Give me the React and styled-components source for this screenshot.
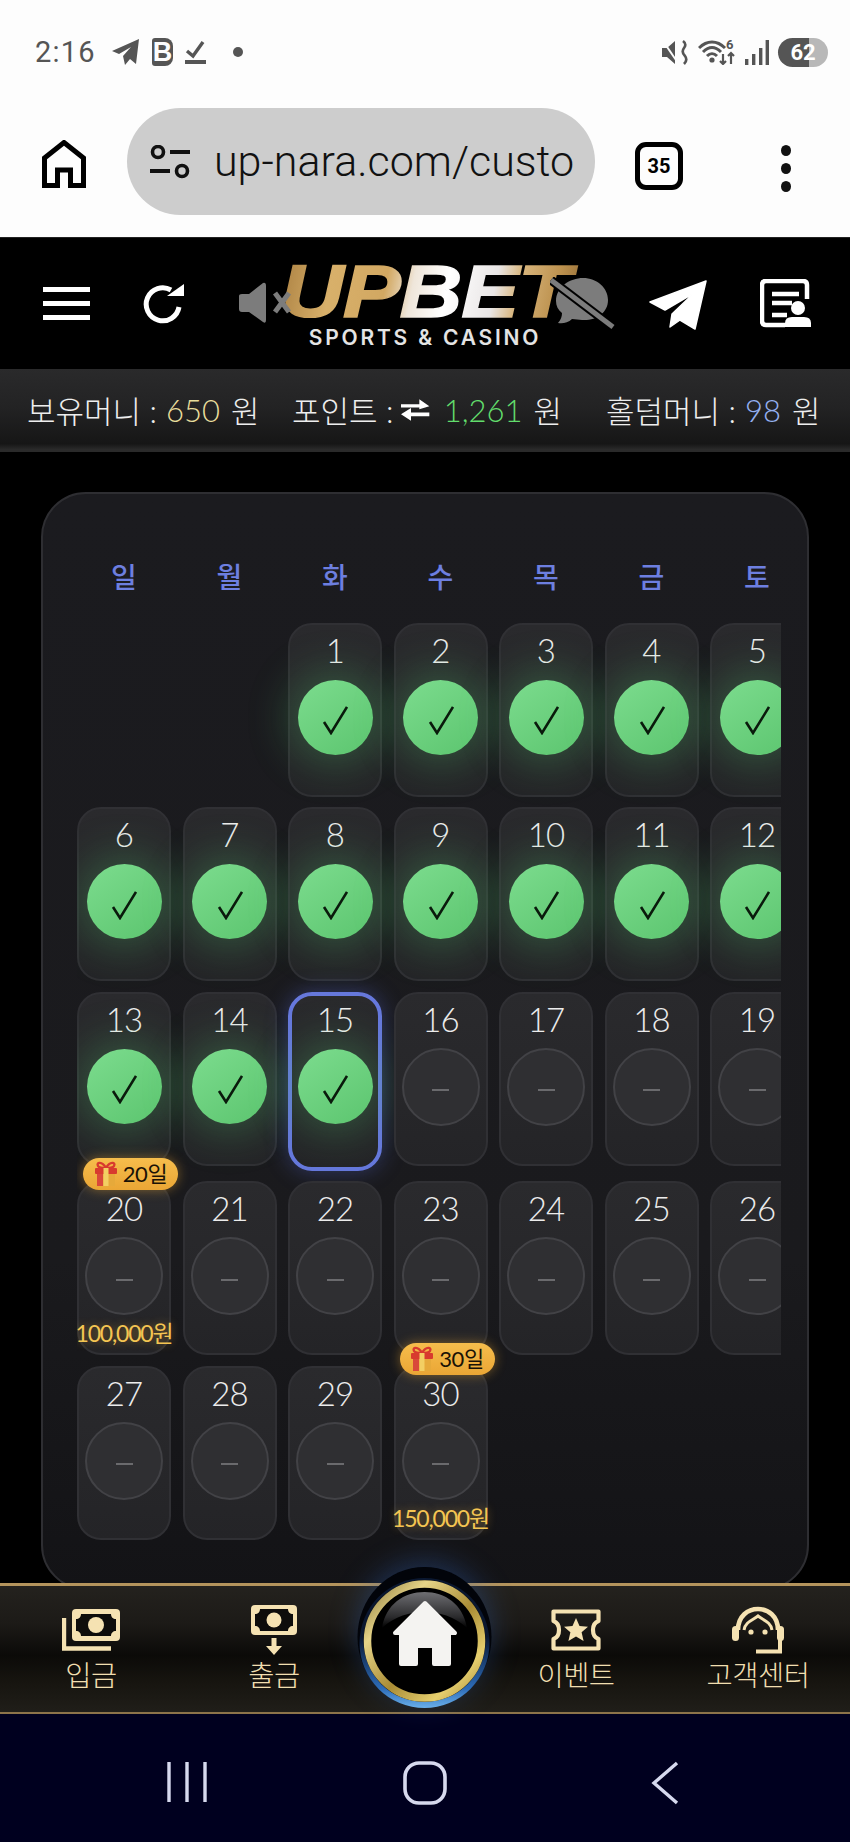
import React from "react";
import styled, { createGlobalStyle } from "styled-components";

const Global = createGlobalStyle`
  html, body { margin: 0; padding: 0; background: #000; }
  * { box-sizing: border-box; }
  body { font-family: Roboto, "Noto Sans CJK KR", sans-serif; }
`;

const Page = styled.div`
  width: 850px; height: 1842px; display: flex; flex-direction: column;
  overflow: hidden; background: #000; position: relative;
`;

/* ---------- phone status bar ---------- */
const StatusBar = styled.div`
  height: 104px; flex: none; background: #fdfdfd; display: flex; align-items: center;
  padding: 0 22px 0 35px; color: #555;
`;
const Clock = styled.span`
  font-size: 29px; letter-spacing: 1.2px; margin-right: 17px; width: 59px;
`;
const StatusLeft = styled.div`display: flex; align-items: center; gap: 12px;`;
const BrandB = styled.span`
  font: 900 27px/28px "Liberation Sans", sans-serif; width: 21px; height: 28px; background: #555;
  color: #fdfdfd; border-radius: 3px 8px 8px 3px; text-align: center; overflow: hidden;
`;
const Dot = styled.span`width: 10px; height: 10px; background: #555; border-radius: 50%; margin-left: 15px;`;
const StatusRight = styled.div`margin-left: auto; display: flex; align-items: center; gap: 9px;`;
const Battery = styled.div`
  width: 50px; height: 29px; border-radius: 15px; color: #fff; font: 700 22px/29px Roboto, sans-serif; text-align: center;
  background: linear-gradient(90deg, #555 0 62%, #b8b8b8 62% 100%);
`;

/* ---------- browser bar ---------- */
const BrowserBar = styled.div`
  height: 134px; flex: none; background: #fdfdfd; display: flex; align-items: flex-start; padding: 4px 0 0 42px;
  border-bottom: 1px solid #222;
`;
const BrowserIcon = styled.div`
  margin-top: ${p => p.$top}px; margin-left: ${p => p.$left}px; display: flex;
`;
const UrlPill = styled.div`
  width: 468px; height: 107px; margin-left: 41px; border-radius: 54px; background: #cdcdcd;
  display: flex; align-items: center; padding-left: 23px; color: #111; overflow: hidden;
`;
const UrlText = styled.span`
  font-size: 43px; font-weight: 300; margin-left: 24px; white-space: nowrap; margin-top: -2px;
`;
const TabCount = styled.div`
  width: 48px; height: 48px; border: 5px solid #000; border-radius: 11px; color: #000; margin-top: 34px; margin-left: 40px;
  font: 700 20px/38px Roboto, sans-serif; text-align: center;
`;
const Dots = styled.div`
  margin-left: 98px; margin-top: 37px; display: flex; flex-direction: column; gap: 7px;
`;
const DotItem = styled.span`width: 10px; height: 11px; border-radius: 50%; background: #111;`;

/* ---------- site header ---------- */
const Header = styled.header`
  height: 131px; flex: none; background: #000; display: flex; align-items: center; padding-left: 43px;
`;
const Burger = styled.div`display: flex; flex-direction: column; gap: 9px; width: 47px;`;
const BurgerBar = styled.span`height: 5px; background: #fff;`;
const HeaderIcon = styled.div`display: flex; margin-left: ${p => p.$left}px;`;
const Logo = styled.div`
  position: relative; width: 285px; height: 80px; margin-left: 99px; flex: none; text-align: center;
`;
const LogoMark = styled.div`
  font: italic 700 75px/54px "Liberation Sans", sans-serif; height: 54px; white-space: nowrap;
  transform: scaleX(1.16); transform-origin: 50% 50%; letter-spacing: -1px; margin-left: -2px;
  background: linear-gradient(100deg, #a57a3c 4%, #d8b06a 22%, #d2a862 38%, #efe6da 46%, #fff 56%, #e9e6e6 70%, #d8b57c 77%, #bd924f 88%, #8c6531 98%);
  -webkit-background-clip: text; background-clip: text; color: transparent; -webkit-text-stroke: 1.5px transparent;
`;
const LogoSub = styled.div`
  font: 600 21px/20px Inter, "Liberation Sans", sans-serif; color: #e4e4e4; letter-spacing: 2.8px;
  margin-top: 10px; white-space: nowrap; margin-left: -3px;
`;
const LogoOverlay = styled.div`position: absolute; left: ${p => p.$left}px; top: ${p => p.$top}px; display: flex;`;

/* ---------- balance bar ---------- */
const BalanceBar = styled.div`
  height: 83px; flex: none; display: flex; align-items: center; padding-left: 27px; color: #eee;
  background: linear-gradient(180deg, #2a2a2b 0%, #232324 45%, #161616 90%, #2a2a2a 97%);
  font-family: Lato, "Noto Sans CJK KR", sans-serif; font-size: 31px; font-weight: 300; white-space: nowrap; padding-bottom: 2px;
`;
const BalanceGroup = styled.div`
  display: flex; align-items: center; width: ${p => p.$w}px; margin-left: ${p => p.$ml}px; flex: none;
`;
const BalanceValue = styled.span`
  color: ${p => p.$c}; margin: 0 11px 0 ${p => p.$left}px;
`;

/* ---------- calendar ---------- */
const Content = styled.main`
  flex: 1; min-height: 0; overflow: hidden; padding: 40px 41px 0 41px; background: #000;
`;
const Panel = styled.section`
  height: 1098px; border-radius: 45px; border: 2px solid #2e2e32; padding: 0 26px 0 34px;
  background: linear-gradient(180deg, #1b1b1f 0%, #1a1a1d 70%, #131316 100%);
`;
const CalClip = styled.div`overflow: hidden; height: 100%; padding-top: 62px;`;
const Calendar = styled.div`
  width: 727px; display: grid; grid-template-columns: repeat(7, 94px); column-gap: 11.5px; row-gap: 10.5px; align-items: start;
`;
const Weekday = styled.div`
  color: #6d7fe0; font: 500 28px/40px "Noto Sans CJK KR", sans-serif; text-align: center; height: 40px; margin-bottom: 16px;
`;
const Cell = styled.div`
  position: relative; height: ${p => (p.$selected ? 179 : 174)}px; border-radius: 24px;
  display: flex; flex-direction: column; align-items: center; padding-top: ${p => (p.$selected ? 8 : 10)}px;
  background: linear-gradient(180deg, #2a2a2d 0%, #242427 100%);
  border: ${p => (p.$selected ? "4px solid #6678dc" : "2px solid #303034")};
  box-shadow: ${p => (p.$selected ? "0 0 22px rgba(90,110,225,.38)" : "none")};
  ${p => p.$start ? `grid-column-start: ${p.$start};` : ""}
`;
const DayNum = styled.div`
  font-family: Lato, Roboto, sans-serif; font-size: 33px; font-weight: 300; line-height: 30px; color: #ececec; letter-spacing: -0.8px;
`;
const DoneCircle = styled.div`
  width: 75px; height: 75px; border-radius: 50%; margin-top: 15px; flex: none; display: flex; align-items: center; justify-content: center;
  padding-top: 6px;
  background: linear-gradient(145deg, #7cdc8e 0%, #5cc56f 100%);
  box-shadow: 0 0 42px 10px rgba(85,205,115,.27);
`;
const PendingCircle = styled.div`
  width: 78px; height: 78px; border-radius: 50%; margin-top: 14px; flex: none; display: flex; align-items: center; justify-content: center;
  padding-top: 7px; background: #2f2f32; border: 2px solid #424246;
`;
const Dash = styled.span`width: 17px; height: 2px; background: #6a6a6d;`;
const RewardBadge = styled.div`
  position: absolute; top: -25px; left: 4px; width: 95px; height: 32px; border-radius: 16px; z-index: 2; gap: 5px;
  display: flex; align-items: center; justify-content: center; color: #1a1206;
  font: 400 22px/32px Lato, "Noto Sans CJK KR", sans-serif; letter-spacing: -0.5px;
  background: linear-gradient(180deg, #f6bd4c 0%, #eaa635 100%);
  box-shadow: 0 0 12px rgba(240,170,50,.45);
`;
const Amount = styled.div`
  position: absolute; left: 50%; bottom: 5px; transform: translateX(-50%); white-space: nowrap; color: #f4c552;
  font: 400 23px/30px Lato, "Noto Sans CJK KR", sans-serif; letter-spacing: -1.2px;
  text-shadow: 0 0 8px rgba(240,180,60,.45);
`;

/* ---------- bottom nav ---------- */
const BottomNav = styled.nav`
  position: relative; height: 131px; flex: none; display: grid; grid-template-columns: 182px 184px 116px 188px 176px;
  padding-top: 18px; border-top: 3px solid #b4945c; border-bottom: 2px solid #8d744a;
  background: linear-gradient(180deg, #24221e 0%, #1c1a17 30%, #0b0a08 55%, #16140f 75%, #201e19 100%);
`;
const NavItem = styled.a`
  display: flex; flex-direction: column; align-items: center; color: #f1dfb0;
`;
const NavIconBox = styled.div`height: 52px; display: flex; align-items: center; justify-content: center;`;
const NavLabel = styled.span`
  font: 300 28.5px/32px "Noto Sans CJK KR", sans-serif; margin-top: 2px; white-space: nowrap; letter-spacing: -0.5px;
`;
const HomeButton = styled.div`
  position: absolute; left: 354px; top: -24px; display: flex; z-index: 3;
  filter: drop-shadow(0 -6px 14px rgba(50,100,190,.35));
`;

/* ---------- android nav ---------- */
const AndroidBar = styled.div`
  height: 128px; flex: none; background: #00001f; display: flex; align-items: flex-start; padding: 47px 0 0 167px;
`;
const AndroidIcon = styled.div`display: flex; margin-left: ${p => p.$left}px;`;

/* ---------- drawings ---------- */
const Check = () => (
  <svg width="26" height="30" viewBox="0 0 26 30" fill="none">
    <path d="M2 17 L9 28 L25 2" stroke="#0a1a0c" strokeWidth="2.6" />
  </svg>
);

const Gift = () => (
  <svg width="24" height="26" viewBox="0 0 24 26">
    <path d="M12 7 C8 0 2 1 4 5 C5 7 9 7 12 7 C15 7 19 7 20 5 C22 1 16 0 12 7Z" fill="none" stroke="#d83a2e" strokeWidth="2.4" />
    <rect x="1" y="7" width="22" height="6" rx="1" fill="#d83a2e" />
    <rect x="3" y="13" width="18" height="12" fill="#e6a93a" />
    <rect x="3" y="13" width="6" height="12" fill="#d9483a" />
    <rect x="9.5" y="7" width="5" height="18" fill="#f3cf63" />
  </svg>
);

const StatusTelegram = () => (
  <svg width="29" height="26" viewBox="0 0 29 26"><path d="M28 0 L1 12 L8 15 L20 8 L12 17 L14 26 L19 20 L25 25 Z" fill="#555" /></svg>
);
const StatusCheck = () => (
  <svg width="21" height="26" viewBox="0 0 21 26" fill="none"><path d="M2 12 L8 17 L18 3" stroke="#555" strokeWidth="3.4" /><rect y="21" width="21" height="4" fill="#555" /></svg>
);
const Muted = () => (
  <svg width="28" height="25" viewBox="0 0 28 25" fill="none">
    <path d="M1 8 H6 L14 1 V24 L6 17 H1 Z" fill="#555" />
    <path d="M2 1 L17 23" stroke="#fdfdfd" strokeWidth="2" />
    <path d="M22 1 Q26 4 23 8 Q20 12 24 16 Q27 20 23 24" stroke="#555" strokeWidth="2.6" />
  </svg>
);
const Wifi = () => (
  <svg width="38" height="26" viewBox="0 0 38 26" fill="none">
    <path d="M1 9 C9 1 19 1 27 9 M5 13 C11 7 17 7 23 13 M9 17 C12 14 16 14 19 17" stroke="#555" strokeWidth="3" />
    <circle cx="14" cy="21" r="2.6" fill="#555" />
    <text x="28" y="10" fontSize="13" fontWeight="700" fontFamily="Roboto, sans-serif" fill="#555">6</text>
    <path d="M25 15 V25 M22 22 L25 25 L28 22 M33 25 V14 M30 17 L33 14 L36 17" stroke="#555" strokeWidth="2.2" />
  </svg>
);
const Signal = () => (
  <svg width="24" height="25" viewBox="0 0 24 25" fill="#555">
    <rect x="0" y="19" width="3.4" height="6" /><rect x="7" y="14" width="3.4" height="11" />
    <rect x="14" y="8" width="3.4" height="17" /><rect x="20.6" y="0" width="3.4" height="25" />
  </svg>
);
const BrowserHome = () => (
  <svg width="44" height="48" viewBox="0 0 44 48" fill="none">
    <path d="M22 2.5 L41.5 18 V45.5 H28.5 V30 H15.5 V45.5 H2.5 V18 Z" stroke="#000" strokeWidth="5" />
  </svg>
);
const SiteSettings = () => (
  <svg width="40" height="34" viewBox="0 0 40 34" fill="none">
    <circle cx="8" cy="7" r="5.5" stroke="#111" strokeWidth="3.6" /><path d="M20 7 H40 M0 26 H20" stroke="#111" strokeWidth="4" />
    <circle cx="32" cy="26" r="5.5" stroke="#111" strokeWidth="3.6" />
  </svg>
);
const Refresh = () => (
  <svg width="42" height="42" viewBox="0 0 42 42" fill="none">
    <path d="M36 24 A16.5 16.5 0 1 1 28 7" stroke="#fff" strokeWidth="5" />
    <path d="M24 13 H41 V1 Z" fill="#fff" />
  </svg>
);
const Speaker = () => (
  <svg width="52" height="42" viewBox="0 0 52 42" fill="none">
    <path d="M0 14 Q0 12 3 12 H10 L24 1 Q27 0 27 4 V38 Q27 42 24 40 L10 30 H3 Q0 30 0 27 Z" fill="#7c7c7c" />
    <path d="M36 11 L50 30 M50 11 L36 30" stroke="#7c7c7c" strokeWidth="5" />
  </svg>
);
const ChatMuted = () => (
  <svg width="66" height="52" viewBox="0 0 66 52" fill="none">
    <path d="M6 24 C6 10 20 1 33 1 C47 1 58 11 58 23 C58 36 46 44 32 43 L22 42 C18 46 12 47 8 46 C11 43 12 39 12 36 C8 33 6 29 6 24Z" fill="#7c7c7c" />
    <path d="M1 3 L63 50" stroke="#000" strokeWidth="9" />
    <path d="M1 3 L63 50" stroke="#7c7c7c" strokeWidth="5" />
  </svg>
);
const Plane = () => (
  <svg width="60" height="52" viewBox="0 0 60 52"><path d="M59 3 L3 24 L18 32 L47 15 L25 36 L23 49 L33 42 L48 51 Z" fill="#fff" stroke="#fff" strokeWidth="1.5" strokeLinejoin="round" /></svg>
);
const ProfileDoc = () => (
  <svg width="52" height="50" viewBox="0 0 52 50" fill="none">
    <path d="M25 46 H6 Q2 46 2 42 V6 Q2 2 6 2 H43 Q47 2 47 6 V20" stroke="#fff" strokeWidth="4.5" />
    <path d="M12 15 H39 M12 24 H32 M12 36 H27" stroke="#fff" strokeWidth="4.5" />
    <circle cx="38" cy="29" r="7" fill="#fff" />
    <path d="M25 48 V44 Q25 38 32 38 H44 Q51 38 51 44 V48 Z" fill="#fff" />
  </svg>
);
const Swap = () => (
  <svg width="34" height="26" viewBox="0 0 34 26" fill="#fff" style={{ margin: "0 0 0 8px" }}>
    <path d="M0 6 H22 V0 L34 8.5 L22 12 V10 H0 Z" /><path d="M34 16 H12 V10.5 L0 18 L12 26 V20.5 H34 Z" />
  </svg>
);
const NavDeposit = () => (
  <svg width="58" height="42" viewBox="0 0 58 42" fill="none">
    <path d="M2 9 V39.5 H49" stroke="#f5e2b2" strokeWidth="4.4" />
    <rect x="10" y="0" width="48" height="32" rx="4" fill="#f5e2b2" />
    <path d="M19 5 H49 C49 8 51 10 54 10 V22 C51 22 49 24 49 27 H19 C19 24 17 22 14 22 V10 C17 10 19 8 19 5Z" fill="#0e0d0b" />
    <circle cx="34" cy="16" r="8" fill="#f5e2b2" />
  </svg>
);
const NavWithdraw = () => (
  <svg width="46" height="50" viewBox="0 0 46 50" fill="none">
    <rect width="46" height="30" rx="4" fill="#f5e2b2" />
    <path d="M9 4 H37 C37 7 39 9 42 9 V21 C39 21 37 23 37 26 H9 C9 23 7 21 4 21 V9 C7 9 9 7 9 4Z" fill="#0e0d0b" />
    <circle cx="23" cy="15" r="7.5" fill="#f5e2b2" />
    <path d="M20.5 33 H25.5 V41 H31 L23 50 L15 41 H20.5 Z" fill="#f5e2b2" />
  </svg>
);
const NavTicket = () => (
  <svg width="52" height="42" viewBox="0 0 52 42" fill="none">
    <path d="M3.5 2.5 H48.5 V12 Q43 14 43 21 Q43 28 48.5 30 V39.5 H3.5 V30 Q9 28 9 21 Q9 14 3.5 12 Z" stroke="#f5e2b2" strokeWidth="4.2" strokeLinejoin="round" />
    <path d="M26 9 L29.5 17 L38 17.7 L31.6 23.2 L33.6 32 L26 27.4 L18.4 32 L20.4 23.2 L14 17.7 L22.5 17 Z" fill="#f5e2b2" />
  </svg>
);
const NavAgent = () => (
  <svg width="54" height="48" viewBox="0 0 54 48" fill="none">
    <path d="M7 24 C7 -4 47 -4 47 24" stroke="#f5e2b2" strokeWidth="4.6" />
    <rect x="1" y="20" width="7" height="15" rx="3.5" fill="#f5e2b2" />
    <rect x="46" y="20" width="7" height="15" rx="3.5" fill="#f5e2b2" />
    <path d="M13 24 C14 16 22 14 27 10 C32 14 40 16 41 24" stroke="#f5e2b2" strokeWidth="3" />
    <circle cx="20" cy="26" r="2.6" fill="#f5e2b2" /><circle cx="34" cy="26" r="2.6" fill="#f5e2b2" />
    <path d="M49 34 V45.5 H25" stroke="#f5e2b2" strokeWidth="4" />
  </svg>
);
const HomeDrawing = () => (
  <svg width="140" height="150" viewBox="0 0 140 150">
    <defs>
      <linearGradient id="gold" x1="0" y1="0" x2="1" y2="1">
        <stop offset="0" stopColor="#8d7a3e" /><stop offset=".25" stopColor="#e6d488" />
        <stop offset=".55" stopColor="#a98c35" /><stop offset=".8" stopColor="#e6cf6e" /><stop offset="1" stopColor="#a98c3b" />
      </linearGradient>
      <linearGradient id="blue" x1="0" y1="0" x2="0" y2="1">
        <stop offset=".45" stopColor="#0a1730" /><stop offset=".85" stopColor="#2d6cb8" /><stop offset="1" stopColor="#6ab0ea" />
      </linearGradient>
      <linearGradient id="dome" x1="0" y1="0" x2="0" y2="1">
        <stop offset="0" stopColor="#6e6e72" /><stop offset=".7" stopColor="#2a2a2c" /><stop offset="1" stopColor="#000" />
      </linearGradient>
    </defs>
    <ellipse cx="70.5" cy="75" rx="67" ry="70" fill="#02040a" />
    <circle cx="70.5" cy="81" r="65" fill="url(#blue)" />
    <circle cx="70.5" cy="79" r="61" fill="#000" />
    <circle cx="70.5" cy="79" r="57" fill="none" stroke="url(#gold)" strokeWidth="7.5" />
    <path d="M28 66 C32 42 50 30 70.5 30 C91 30 109 42 113 66 C100 54 85 50 70.5 50 C56 50 41 54 28 66Z" fill="url(#dome)" />
    <path d="M71 41 L101 71 H95 V102 H80 V84 H62 V102 H47 V71 H41 Z" fill="#f4f3f1" stroke="#f4f3f1" strokeWidth="4" strokeLinejoin="round" />
  </svg>
);
const AndroidRecents = () => (
  <svg width="40" height="42" viewBox="0 0 40 42" fill="none"><path d="M2 1 V41 M20 1 V41 M38 1 V41" stroke="#d6d9ee" strokeWidth="3.4" /></svg>
);
const AndroidHome = () => (
  <svg width="44" height="44" viewBox="0 0 44 44" fill="none"><rect x="2" y="2" width="40" height="40" rx="14" stroke="#d6d9ee" strokeWidth="3.6" /></svg>
);
const AndroidBack = () => (
  <svg width="28" height="44" viewBox="0 0 28 44" fill="none"><path d="M26 2 L3 22 L26 42" stroke="#d6d9ee" strokeWidth="3.4" /></svg>
);

const WEEK = ["일", "월", "화", "수", "목", "금", "토"];
const REWARDS = { 20: { badge: "20일", amount: "100,000원" }, 30: { badge: "30일", amount: "150,000원" } };
const DAYS = Array.from({ length: 30 }, (_, i) => i + 1);

const NAV = [
  { label: "입금", Icon: NavDeposit },
  { label: "출금", Icon: NavWithdraw },
  null,
  { label: "이벤트", Icon: NavTicket },
  { label: "고객센터", Icon: NavAgent },
];

export default function App() {
  return (
    <Page>
      <Global />
      <StatusBar>
        <Clock>2:16</Clock>
        <StatusLeft>
          <StatusTelegram />
          <BrandB>B</BrandB>
          <StatusCheck />
          <Dot />
        </StatusLeft>
        <StatusRight>
          <Muted />
          <Wifi />
          <Signal />
          <Battery>62</Battery>
        </StatusRight>
      </StatusBar>

      <BrowserBar>
        <BrowserIcon $top={32} $left={0}><BrowserHome /></BrowserIcon>
        <UrlPill>
          <SiteSettings />
          <UrlText>up-nara.com/custo</UrlText>
        </UrlPill>
        <TabCount>35</TabCount>
        <Dots><DotItem /><DotItem /><DotItem /></Dots>
      </BrowserBar>

      <Header>
        <Burger><BurgerBar /><BurgerBar /><BurgerBar /></Burger>
        <HeaderIcon $left={53}><Refresh /></HeaderIcon>
        <Logo>
          <LogoMark>UPBET</LogoMark>
          <LogoSub>SPORTS &amp; CASINO</LogoSub>
          <LogoOverlay $left={-45} $top={18}><Speaker /></LogoOverlay>
          <LogoOverlay $left={266} $top={13}><ChatMuted /></LogoOverlay>
        </Logo>
        <HeaderIcon $left={78}><Plane /></HeaderIcon>
        <HeaderIcon $left={53}><ProfileDoc /></HeaderIcon>
      </Header>

      <BalanceBar>
        <BalanceGroup $w={231} $ml={0}>보유머니 :<BalanceValue $c="#e8dd9c" $left={9}>650</BalanceValue>원</BalanceGroup>
        <BalanceGroup $w={270} $ml={34}>포인트 :<Swap /><BalanceValue $c="#62dd6c" $left={14}>1,261</BalanceValue>원</BalanceGroup>
        <BalanceGroup $w={212} $ml={44}>홀덤머니 :<BalanceValue $c="#94b0f0" $left={9}>98</BalanceValue>원</BalanceGroup>
      </BalanceBar>

      <Content>
        <Panel>
          <CalClip>
            <Calendar>
              {WEEK.map(d => <Weekday key={d}>{d}</Weekday>)}
              {DAYS.map(day => {
                const reward = REWARDS[day];
                return (
                  <Cell key={day} $selected={day === 15} $start={day === 1 ? 3 : 0}>
                    {reward && <RewardBadge><Gift />{reward.badge}</RewardBadge>}
                    <DayNum>{day}</DayNum>
                    {day <= 15
                      ? <DoneCircle><Check /></DoneCircle>
                      : <PendingCircle><Dash /></PendingCircle>}
                    {reward && <Amount>{reward.amount}</Amount>}
                  </Cell>
                );
              })}
            </Calendar>
          </CalClip>
        </Panel>
      </Content>

      <BottomNav>
        {NAV.map((item, i) => item
          ? <NavItem key={item.label}><NavIconBox><item.Icon /></NavIconBox><NavLabel>{item.label}</NavLabel></NavItem>
          : <div key={i} />)}
        <HomeButton><HomeDrawing /></HomeButton>
      </BottomNav>

      <AndroidBar>
        <AndroidIcon $left={0}><AndroidRecents /></AndroidIcon>
        <AndroidIcon $left={196}><AndroidHome /></AndroidIcon>
        <AndroidIcon $left={204}><AndroidBack /></AndroidIcon>
      </AndroidBar>
    </Page>
  );
}
